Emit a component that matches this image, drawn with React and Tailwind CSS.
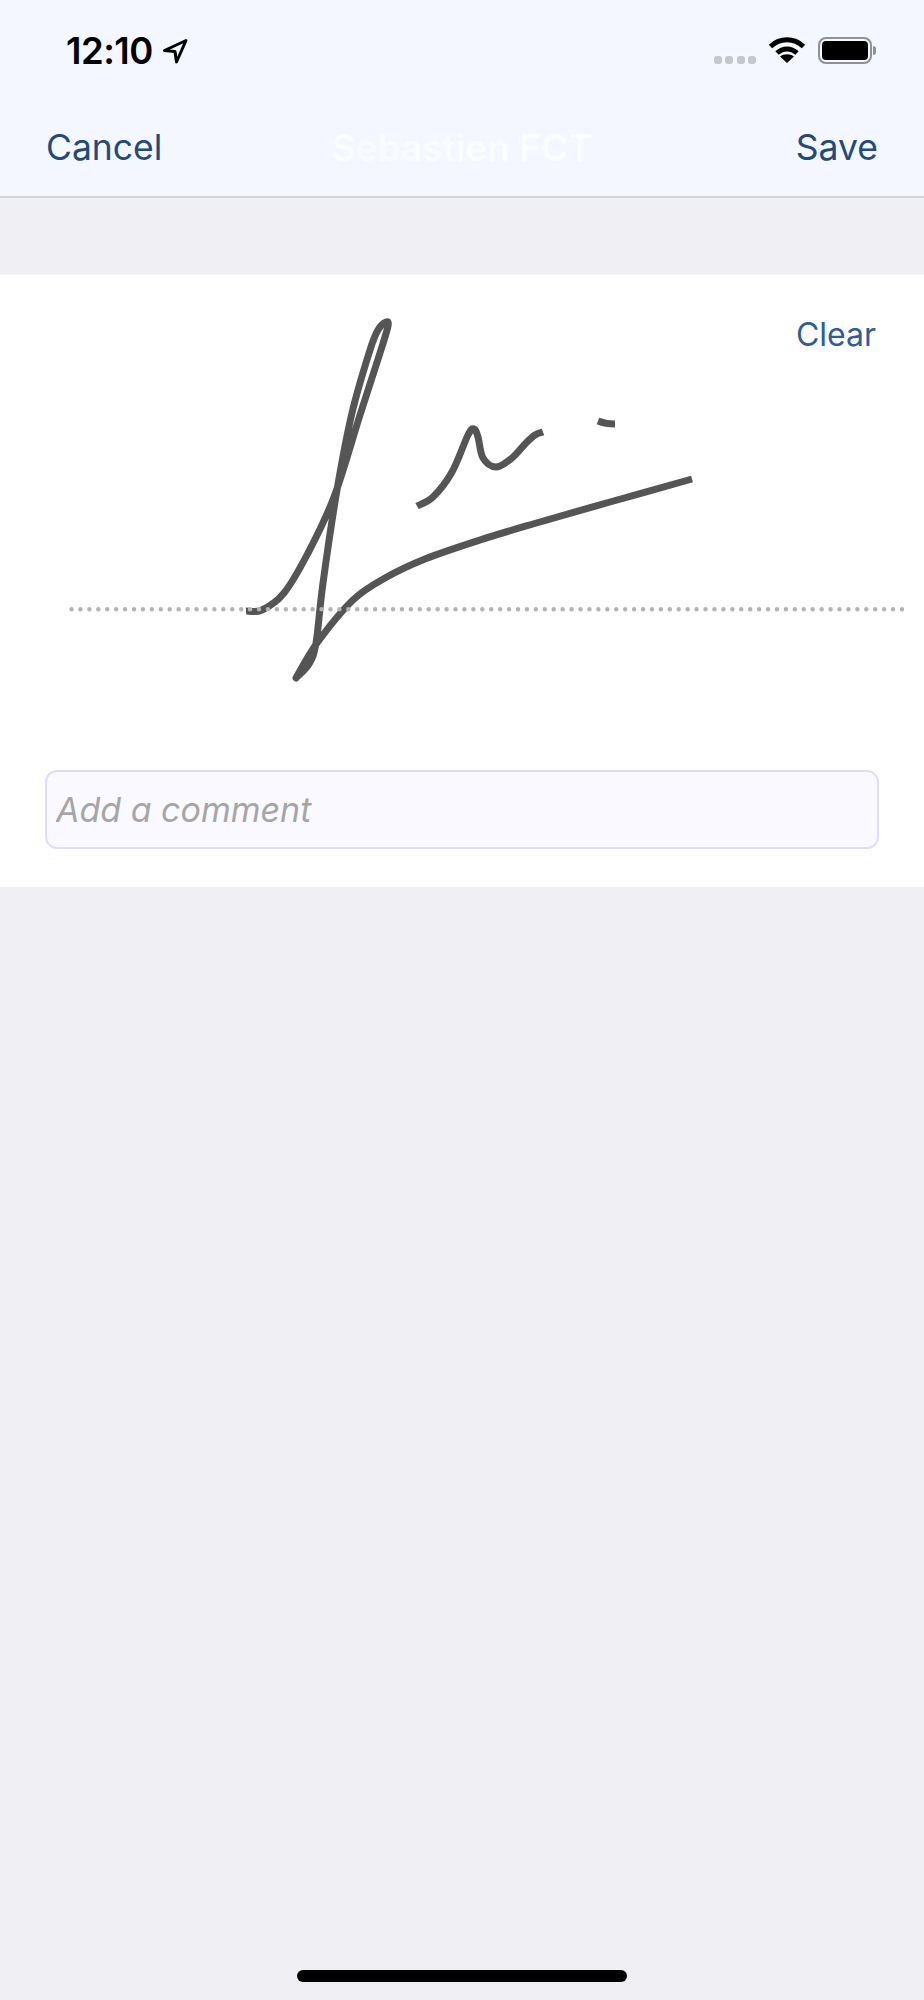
const font = { fontFamily: "Inter, 'Noto Sans', sans-serif" };

// smooth line through the measured points of a pen stroke
const spline = (pts) =>
  pts
    .slice(1)
    .map((p2, i) => {
      const p1 = pts[i];
      const p0 = pts[i - 1] || p1;
      const p3 = pts[i + 2] || p2;
      const c1 = [p1[0] + (p2[0] - p0[0]) / 6, p1[1] + (p2[1] - p0[1]) / 6];
      const c2 = [p2[0] - (p3[0] - p1[0]) / 6, p2[1] - (p3[1] - p1[1]) / 6];
      return `C${c1[0]} ${c1[1]} ${c2[0]} ${c2[1]} ${p2[0]} ${p2[1]}`;
    })
    .join(" ");

const loop = [
  [246, 611], [262, 610], [284, 593], [308, 553], [334, 497], [360, 415], [380, 353], [388, 326], [386, 322],
  [378, 330], [370, 350], [352, 413], [337, 490], [323, 583], [316, 643], [309, 664], [296, 678],
];
const tail = [
  [296, 678], [317, 643], [353, 600], [385, 578], [425, 559], [480, 540], [533, 524], [610, 502], [692, 479],
];
const wave = [
  [417, 506], [433, 497], [452, 472], [468, 435], [474, 429], [478, 437], [483, 458], [496, 467], [512, 458],
  [526, 443], [535, 435], [543, 432],
];

function StatusBar() {
  return (
    <div className="flex h-[97px] items-start justify-between pl-[66px] pr-[48px] pt-[30px]">
      <div className="flex items-center gap-[9px]">
        <span className="text-[36.5px] leading-[42px] font-semibold tracking-[-0.5px] text-black">12:10</span>
        <svg width="26" height="26" viewBox="0 0 26 26" fill="none">
          <path d="M24 2.500 2.500 12.500l10.500 1 1.500 10.500z" stroke="#000" strokeWidth="3" strokeLinejoin="round" />
        </svg>
      </div>
      <div className="flex items-center gap-[12px] pt-[6px]">
        <div className="mt-[19px] flex gap-[3.5px]">
          <span className="h-[8px] w-[8px] rounded-[3px] bg-[#c6c7cc]" />
          <span className="h-[8px] w-[8px] rounded-[3px] bg-[#c6c7cc]" />
          <span className="h-[8px] w-[8px] rounded-[3px] bg-[#c6c7cc]" />
          <span className="h-[8px] w-[8px] rounded-[3px] bg-[#c6c7cc]" />
        </div>
        <svg width="38" height="28" viewBox="0 0 38 28" fill="none">
          <path d="M2.500 10.500C12 1.500 26 1.500 35.500 10.500" stroke="#000" strokeWidth="5" />
          <path d="M9 17c6-5.500 14-5.500 20 0" stroke="#000" strokeWidth="5" />
          <path d="M19 27l-7-6.500c4-3 10-3 14 0z" fill="#000" />
        </svg>
        <div className="flex items-center">
          <div className="h-[27px] w-[54px] rounded-[8px] border-[2px] border-[#8f9092] p-[2px]">
            <div className="h-full w-full rounded-[4px] bg-black" />
          </div>
          <div className="ml-[1px] h-[9px] w-[3px] rounded-r-[3px] bg-[#8f9092]" />
        </div>
      </div>
    </div>
  );
}

function NavBar() {
  return (
    <div className="grid h-[101px] grid-cols-[1fr_auto_1fr] items-start border-b-[2px] border-[#d3d4da] px-[46px] pt-[29px] text-[35.5px] leading-[44px] text-[#234a7c]">
      <span>Cancel</span>
      <span className="text-[37px] font-semibold text-[#fbfdff]">Sebastien FCT</span>
      <span className="text-right">Save</span>
    </div>
  );
}

function Signature() {
  return (
    <svg
      className="absolute left-0 top-0"
      width="924"
      height="420"
      viewBox="0 275 924 420"
      fill="none"
    >
      <g stroke="#555555" strokeWidth="7" strokeLinejoin="round">
        <path d={`M246 611 ${spline(loop)} ${spline(tail)}`} />
        <path d={`M417 506 ${spline(wave)}`} />
        <path d="M598 421C603 423 609 424 615 424" />
      </g>
      <path d="M71.500 609.300H904" stroke="#b4b4b4" strokeWidth="4.500" strokeLinecap="round" strokeDasharray="0 8.930" />
    </svg>
  );
}

export default function App() {
  return (
    <div className="flex h-[2000px] w-[924px] flex-col overflow-hidden bg-[#efeff4]" style={font}>
      <div className="bg-[#f4f7ff]">
        <StatusBar />
        <NavBar />
      </div>

      <div className="mt-[77px] h-[612px] bg-white">
        <div className="relative h-[400px]">
          <Signature />
          <div className="absolute right-[48px] top-[40px] text-[32px] leading-[40px] text-[#2f5c9c]">Clear</div>
        </div>
        <div className="relative mx-[45px] mt-[95px]">
          <input
            readOnly
            placeholder="Add a comment"
            className="h-[79px] w-full rounded-[12px] border-[2px] border-[#e0dcff] bg-[#faf9ff] px-[9px] text-[34px] italic outline-none placeholder:text-[#a6a6a6]"
          />
        </div>
      </div>

      <div className="mx-auto mb-[18px] mt-auto h-[12px] w-[330px] rounded-full bg-black" />
    </div>
  );
}
